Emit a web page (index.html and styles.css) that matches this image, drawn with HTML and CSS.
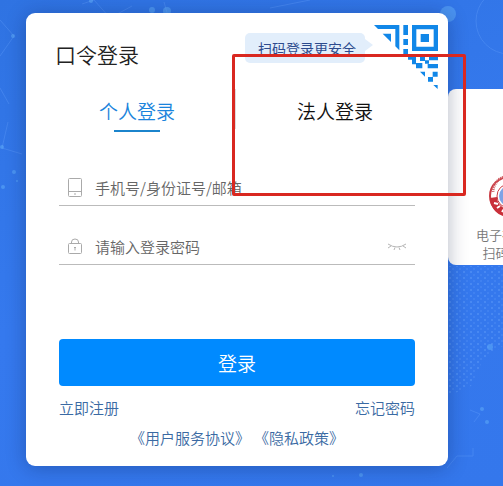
FILE: index.html
```html
<!DOCTYPE html>
<html lang="zh-CN">
<head>
<meta charset="utf-8">
<meta name="viewport" content="width=device-width, initial-scale=1">
<title>口令登录</title>
<link rel="stylesheet" href="styles.css">
</head>
<body>
<svg class="backdrop" viewBox="0 0 503 486" preserveAspectRatio="xMidYMid slice" aria-hidden="true">
  <defs>
    <pattern id="dots" width="7" height="6" patternUnits="userSpaceOnUse">
      <circle cx="2" cy="2" r="1" fill="#7cb4ff" opacity=".35"/>
      <circle cx="5" cy="5" r="1" fill="#7cb4ff" opacity=".2"/>
    </pattern>
  </defs>
  <path fill="url(#dots)" d="M448 266h55v80l-20 14-12 26-23 10z"/>
  <g fill="none" stroke="#6ba6ff" opacity=".3">
    <path d="M0 20l14 16L0 56M0 88l9 16M2 148l20 6M2 148l6-26M82 4l12-4M94 0l16 18 22-12M164 2l4 14M270 8l40-8"/>
    <path d="M447 468l10-12h16v-8M470 410l10 4-6 8"/>
    <circle cx="509" cy="21" r="33"/>
  </g>
  <g fill="#62b0fa" opacity=".5">
    <circle cx="13" cy="36" r="2"/><circle cx="2" cy="147" r="2"/><circle cx="152" cy="10" r="3"/>
    <circle cx="167" cy="11" r="4"/><circle cx="91" cy="1" r="2"/><circle cx="448" cy="14" r="8"/>
    <circle cx="361" cy="475" r="2"/><circle cx="333" cy="476" r="1"/><circle cx="490" cy="347" r="3"/>
    <circle cx="482" cy="409" r="2"/><circle cx="487" cy="422" r="2"/><circle cx="14" cy="172" r="2"/>
    <circle cx="3" cy="187" r="2"/><circle cx="17" cy="181" r="1"/>
  </g>
</svg>
<main class="stage">
  <section class="card">
    <header class="head">
      <h1 class="title">口令登录</h1>
      <span class="tip">扫码登录更安全</span>
      <a class="qr" href="#" aria-label="扫码登录">
        <svg viewBox="42 30 192 192" fill="#1187e8">
          <path d="M42 30H118V106L106 94V42H54zM68 56H93V81z"/>
          <path d="M130 30h14v30h-14zM130 72h14v18h-14zM130 102h14v15h12v8h12v19h19v16h-19v-12h-12v-14h-12v-8L130 118z"/>
          <path fill-rule="evenodd" d="M156 30h78v78h-78zM169 43v52h52V43z"/>
          <path d="M182 57h25v24h-25zM180 124h15v12h12v10h-12v-8h-15zM207 124h27v12h-27zM203 147h31v13h-31zM180 170h15v15zM218 170h15v15h-14v15h-15v-14h14zM220 210h13v12z"/>
        </svg>
      </a>
    </header>
    <nav class="tabs">
      <button class="tab active" type="button">个人登录</button>
      <button class="tab" type="button">法人登录</button>
    </nav>
    <form class="form">
      <div class="field">
        <svg class="icon" viewBox="0 0 14 20" fill="none" stroke="#aaa"><rect x=".5" y=".5" width="13" height="18" rx="1"/><path d="M.5 13.5h13M6 16h2"/></svg>
        <input class="input" type="text" aria-label="账号" placeholder="手机号/身份证号/邮箱">
      </div>
      <div class="field">
        <svg class="icon" viewBox="0 0 14 20" fill="none" stroke="#aaa"><rect x=".5" y="6.500" width="13" height="10" rx="1"/><path d="M3.500 6.500V5a3.500 3 0 0 1 7 0v1.500M7 10v3.500M6 10.500h2"/></svg>
        <input class="input" type="password" aria-label="密码" placeholder="请输入登录密码">
        <button class="eye" type="button" aria-label="显示密码"><svg viewBox="0 0 20 8" fill="none" stroke="#b5b5b5"><path d="M1 1q9 6 18 0M4 3L1 5M8 4.500L7 7M12 4.500l1 2.500M16 3l3 2"/></svg></button>
      </div>
      <button class="submit" type="button">登录</button>
      <div class="links"><a href="#">立即注册</a><a href="#">忘记密码</a></div>
      <div class="terms"><a href="#">《用户服务协议》</a><a href="#">《隐私政策》</a></div>
    </form>
    <span class="highlight"></span>
  </section>
  <aside class="side">
    <div class="side-body">
      <svg class="badge" viewBox="0 0 40 40" aria-hidden="true">
        <circle cx="20" cy="20" r="19" fill="#fff" stroke="#c93a42" stroke-width="2"/>
        <path d="M1 22a19 19 0 0 0 38 0l-7-1a12 12 0 0 1-24 0z" fill="#c9303a"/>
        <path d="M4 16A16 16 0 0 1 36 16" fill="none" stroke="#d2656b" stroke-width="3" stroke-dasharray="1 1"/>
        <circle cx="20" cy="20" r="12" fill="#fff" stroke="#c93a42"/>
        <circle cx="20" cy="20" r="10" fill="#7fa3e6"/>
        <path d="M5 27l4 1M8 32l3-2M13 36l2-3" stroke="#fff" stroke-width="2"/>
      </svg>
      <p class="side-text">电子社保卡<br>扫码登录</p>
    </div>
  </aside>
</main>
</body>
</html>
```
FILE: styles.css
```css
* { box-sizing: border-box; }
body {
  margin: 0;
  min-height: 100vh;
  overflow-x: hidden;
  background: linear-gradient(160deg, #2f73e2, #3579ee 50%, #3477ec);
  font-family: "Noto Sans CJK SC", "Noto Sans", sans-serif;
  font-size: 15px;
  font-weight: 350;
  color: #222;
}
button, input { font: inherit; border: 0; padding: 0; background: none; }
a { color: #3a6aa3; text-decoration: none; }
svg { display: block; }
.backdrop { position: absolute; inset: 0; width: 100%; height: 100%; }
.stage {
  display: grid;
  grid-template-columns: minmax(0, 1fr) 55px;
  align-items: start;
  padding: 13px 0 20px 26px;
}
.card {
  position: relative;
  z-index: 1;
  padding: 12px 10px 16px;
  border-radius: 9px;
  background: #fff;
  box-shadow: 0 2px 20px rgba(0, 20, 60, .3);
}
.head { display: flex; align-items: flex-start; padding-left: 19px; }
.title { margin: 14px auto 0 0; font-size: 21px; line-height: 30px; font-weight: 350; }
.tip {
  position: relative;
  margin: 8px 9px 0 0;
  padding: 0 9px 0 13px;
  border-radius: 5px;
  background: #e2eefb;
  color: #2d4b8e;
  font-size: 14px;
  font-weight: 400;
  line-height: 30px;
}
.tip::after {
  content: "";
  position: absolute;
  left: 100%;
  top: 6px;
  border: solid transparent;
  border-width: 6px 0 6px 8px;
  border-left-color: #e2eefb;
}
.qr { width: 64px; height: 64px; }
.tabs { display: flex; padding: 0 4px 0 2px; }
.tab { position: relative; flex: 1; font-size: 19px; line-height: 44px; color: #111; }
.tab.active { color: #1b84dc; }
.tab.active::before {
  content: "";
  position: absolute;
  right: 0;
  top: 0;
  width: 1px;
  height: 40px;
  background: #ddd;
}
.tab.active::after {
  content: "";
  position: absolute;
  left: 50%;
  bottom: 1px;
  width: 46px;
  height: 2px;
  margin-left: -23px;
  background: #1b84cc;
}
.form { padding: 37px 23px 0; }
.field {
  display: flex;
  align-items: center;
  height: 36px;
  padding: 0 8px;
  border-bottom: 1px solid #bbb;
}
.field + .field { margin-top: 23px; }
.icon { width: 14px; height: 20px; margin: 0 13px 0 1px; }
.input { flex: 1; min-width: 0; height: 34px; outline: 0; color: #333; }
.input::placeholder { color: #666; opacity: 1; }
.eye { width: 20px; }
.submit {
  display: block;
  width: 100%;
  height: 47px;
  margin-top: 74px;
  border-radius: 4px;
  background: #008aff;
  color: #fff;
  font-size: 19px;
}
.links { display: flex; justify-content: space-between; margin-top: 10px; line-height: 24px; }
.terms { display: flex; justify-content: center; gap: 4px; margin-top: 6px; line-height: 24px; }
.highlight {
  position: absolute;
  left: 206px;
  right: -18px;
  top: 41px;
  height: 142px;
  border: 3px solid #d92820;
  border-radius: 2px;
  pointer-events: none;
}
.side {
  position: relative;
  margin-top: 76px;
  overflow: hidden;
  border-radius: 8px 0 0 8px;
  background: #fff;
}
.side-body { width: 121px; padding: 87px 0 3px; }
.badge { width: 40px; height: 40px; margin: 0 auto; }
.side-text { margin: 10px 0 0; font-size: 13px; line-height: 18px; text-align: center; color: #777; }
```
